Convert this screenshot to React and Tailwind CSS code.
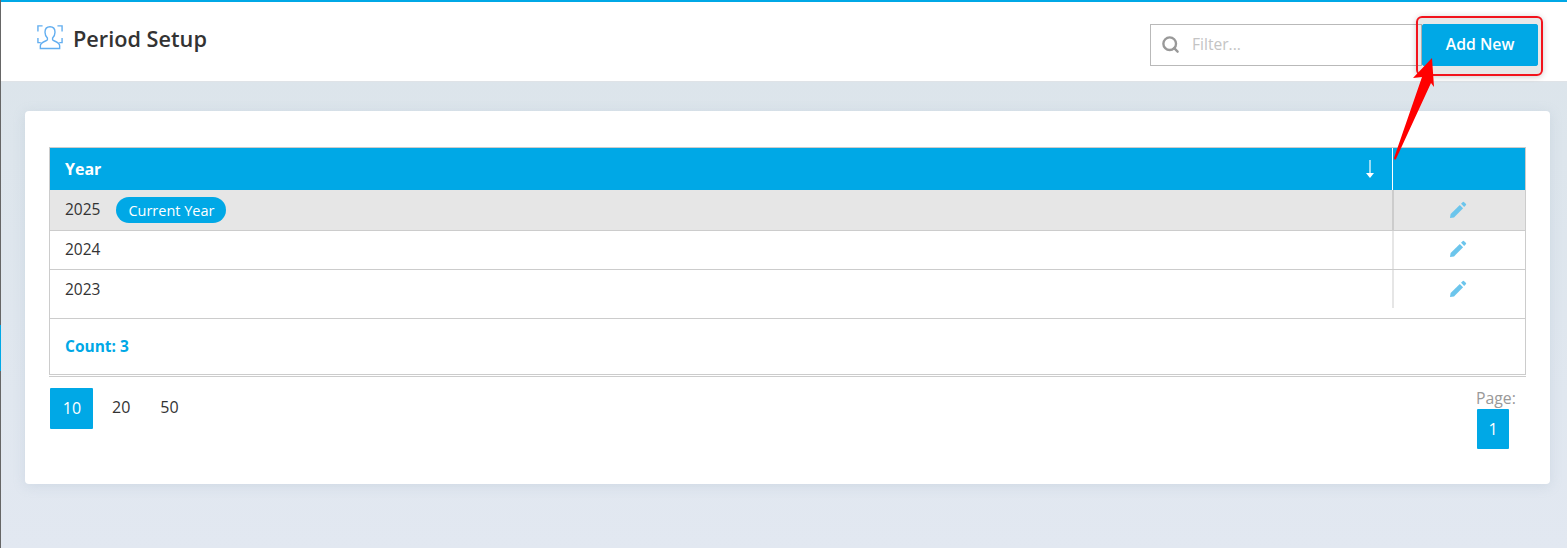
import React from 'react';
import { Search } from 'lucide-react';

const years = [
  { year: '2025', current: true },
  { year: '2024' },
  { year: '2023' },
];

const PencilIcon = () => (
  <svg width="18" height="18" viewBox="0 0 18 18" fill="#6cc5ec">
    <path d="M1 17 L1.6 13 L10.8 3.9 L14.1 7.2 L5 16.4 Z" />
    <path d="M12 2.8 L13.9 1 Q14.4 .6 14.9 1 L17 3.1 Q17.4 3.6 17 4.1 L15.2 6 Z" />
  </svg>
);

const App = () => {
  return (
    <div className="relative h-[548px] w-[1567px] overflow-hidden bg-gradient-to-b from-[#dbe4ea] to-[#e2e8f1] font-['Open_Sans',sans-serif] text-[#333]">
      {/* left edge line */}
      <div className="absolute left-0 top-0 h-full w-px bg-[#666]" />
      <div className="absolute left-0 top-[325px] h-[46px] w-px bg-[#00a8e6]" />

      {/* header */}
      <div className="flex h-[82px] items-start justify-between border-t-2 border-b border-t-[#00a8e6] border-b-[#dfe3e7] bg-white pl-[37px] pr-[29px]">
        <div className="mt-[21px] flex items-start gap-[10px]">
          <svg width="26" height="26" viewBox="0 0 28 28" fill="none" stroke="#62aef0" strokeWidth="1.5" className="mt-[1px]">
            <path d="M1 8V2H6M22 2H27V8M1 15V20H4M27 15V20H24" />
            <path d="M14 3C10.2 3 8.6 6 8.6 9C8.6 12 10 14 11.2 15.2V17C11.2 18.2 3.6 19.2 3.6 23.5V26.4H24.4V23.5C24.4 19.2 16.8 18.2 16.8 17V15.2C18 14 19.4 12 19.4 9C19.4 6 17.8 3 14 3Z" />
          </svg>
          <h1 className="mt-[1px] text-[21.7px] font-semibold leading-[30px] text-[#333]">Period Setup</h1>
        </div>
        <div className="mt-[22px] flex items-start">
          <div className="flex h-[42px] w-[272px] items-center border border-[#b9b9b9] bg-white pl-[10px]">
            <Search size={19} strokeWidth={3} className="mb-[2px] text-[#999]" />
            <span className="ml-[12px] text-[15.6px] text-[#c4c4c4]">Filter...</span>
          </div>
          <button className="flex h-[42px] w-[116px] items-center justify-center rounded-[3px] bg-[#00a8e6] text-[16px] font-semibold text-white">
            Add New
          </button>
        </div>
      </div>

      {/* card */}
      <div className="mx-[25px] mt-[29px] h-[373px] w-[1525px] rounded-[4px] bg-white px-[24px] pt-[36px] shadow-[0_2px_12px_rgba(150,170,190,0.25)]">
        <div className="w-[1477px] border border-[#cccccc]">
          <div className="flex h-[42px] items-center bg-[#00a8e6] text-white">
            <div className="flex h-full flex-1 items-center justify-between pl-[15px] pr-[18px] text-[16px] font-bold">
              <span>Year</span>
              <svg width="8" height="18" viewBox="0 0 8 18" fill="#fff">
                <path d="M3.4 0H4.6V13H8L4 18L0 13H3.4Z" />
              </svg>
            </div>
            <div className="h-full w-[133px] border-l border-white" />
          </div>
          {years.map((row, idx) => (
            <div
              key={row.year}
              className={`flex border-b border-[#cccccc] ${row.current ? 'h-[41px] bg-[#e6e6e6]' : idx === 1 ? 'h-[39px]' : 'h-[48px] border-b-0'}`}
            >
              <div className={`flex flex-1 items-start gap-[15px] pl-[15px] text-[15.5px] ${idx === 2 ? 'pt-[9px]' : idx === 1 ? 'pt-[8px]' : 'pt-[9px]'}`}>
                <span className="leading-[21px]">{row.year}</span>
                {row.current && (
                  <span className="-mt-[2px] ml-[1px] flex h-[26px] w-[110px] items-center justify-center rounded-full bg-[#00a8e6] pt-[1px] text-[14.5px] text-white">
                    Current Year
                  </span>
                )}
              </div>
              <div className={`relative flex w-[133px] justify-center pr-[1px] ${idx === 2 ? 'pt-[10px]' : idx === 1 ? 'pt-[9px]' : 'pt-[11px]'}`}>
                <div className={`absolute left-0 top-0 w-[2px] ${row.current ? 'h-full bg-[#cccccc]' : idx === 1 ? 'h-full bg-[#e6e6e6]' : 'h-[38px] bg-[#e6e6e6]'}`} />
                <PencilIcon />
              </div>
            </div>
          ))}
          <div className="flex h-[56px] items-center border-t border-[#cccccc] pl-[15px] text-[15.5px] font-bold text-[#00a8e6]">
            Count: 3
          </div>
        </div>
        <div className="mt-[1px] h-px w-[1477px] bg-[#cccccc]" />

        {/* pager */}
        <div className="mt-[11px] flex items-start justify-between pl-[1px] pr-[10px]">
          <div className="flex items-start text-[16px]">
            <span className="flex h-[41px] w-[43px] items-center justify-center rounded-[1px] bg-[#00a8e6] pl-[1px] pb-[1px] text-white">10</span>
            <span className="ml-[19px] flex h-[38px] items-center">20</span>
            <span className="ml-[30px] flex h-[38px] items-center">50</span>
          </div>
          <div className="-mt-[1px] flex w-[40px] flex-col items-start">
            <span className="text-[15.8px] leading-[22px] text-[#999]">Page:</span>
            <span className="ml-[1px] flex h-[40px] w-[32px] items-center justify-center rounded-[1px] bg-[#00a8e6] text-[16px] text-white">1</span>
          </div>
        </div>
      </div>

      {/* red annotation over the add button */}
      <div className="absolute left-[1416px] top-[16px] h-[60px] w-[127px] rounded-[6px] border-2 border-[#f2131c] bg-[rgba(120,130,130,0.18)] shadow-[0_1px_6px_rgba(0,0,0,0.2)]">
        <span className="absolute left-[4px] top-[6px] flex h-[42px] w-[116px] items-center justify-center rounded-[3px] bg-[#00a8e6] text-[15.8px] font-semibold text-white">
          Add New
        </span>
      </div>
      <svg className="absolute left-[1385px] top-[50px]" width="60" height="115" viewBox="0 0 60 115" fill="#ff0000">
        <path d="M47 8 L28 28 L37 27 L9 108 Q9.5 111 11 109 L46 33 L49 37 Z" />
      </svg>
    </div>
  );
};

export default App;
